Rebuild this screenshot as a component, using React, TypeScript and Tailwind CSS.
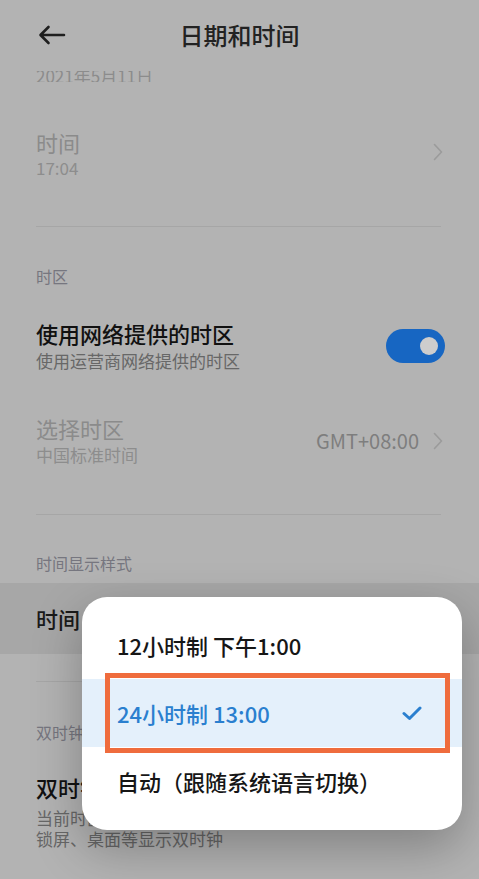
import React from "react";

const font = { fontFamily: '"Noto Sans CJK SC", "Noto Sans", sans-serif' };

function Chevron() {
  return (
    <svg width="10" height="18" viewBox="0 0 10 18" fill="none">
      <path d="M1.5 1.5 L8.5 9 L1.5 16.5" stroke="#9b9b9b" strokeWidth="1.6" strokeLinecap="round" strokeLinejoin="round" />
    </svg>
  );
}

function BackArrow() {
  return (
    <svg width="28" height="20" viewBox="0 0 28 20" fill="none">
      <path d="M26 10 H3 M10.5 2 L2.5 10 L10.5 18" stroke="#1f1f1f" strokeWidth="2.6" strokeLinecap="round" strokeLinejoin="round" />
    </svg>
  );
}

function Toggle() {
  return (
    <div className="w-[59px] h-[34px] rounded-full bg-[#1766c2] flex items-center justify-end pr-[7px]">
      <div className="w-[18px] h-[18px] rounded-full bg-[#cdcdcd]" />
    </div>
  );
}

function Divider() {
  return <div className="h-px bg-[#a6a6a6] ml-[36px] mr-[38px]" />;
}

function TimeFormatDialog() {
  return (
    <div className="absolute left-[82px] top-[597px] w-[380px] h-[233px] rounded-[25px] bg-white shadow-[0_18px_50px_rgba(0,0,0,0.28)] pt-[15px]">
      <div className="h-[67px] flex items-center pl-[35px] text-[22px] font-medium text-[#161616]">
        12小时制 下午1:00
      </div>
      <div className="h-[68px] flex items-center justify-between pl-[35px] pr-[40px] bg-[#e4f0fb] text-[22px] font-medium text-[#2a7fcf]">
        <span>24小时制 13:00</span>
        <svg width="20" height="15" viewBox="0 0 20 15" fill="none">
          <path d="M2 7.5 L7.5 12.5 L18 2" stroke="#2a7fcf" strokeWidth="3" strokeLinecap="round" strokeLinejoin="round" />
        </svg>
      </div>
      <div className="h-[68px] flex items-center pl-[35px] text-[22px] font-medium text-[#161616]">
        自动（跟随系统语言切换）
      </div>
      <div className="absolute left-[23px] top-[76px] w-[345px] h-[80px] border-[5px] border-[#ef6c3d]" />
    </div>
  );
}

export default function App() {
  return (
    <div className="relative w-full h-[879px] overflow-hidden bg-[#b3b3b3]" style={font}>
      <div className="h-[71px] pb-[1px] flex items-center relative">
        <div className="pl-[38px]">
          <BackArrow />
        </div>
        <div className="absolute left-0 right-0 text-center text-[24px] font-medium text-[#222]">日期和时间</div>
      </div>

      <div className="h-[11px] overflow-hidden pl-[36px]">
        <div className="mt-[-4px] text-[17px] leading-[17px] text-[#8c8c8c]">2021年5月11日</div>
      </div>

      <div className="pt-[46px] pb-[46px] pl-[36px] pr-[36px] flex items-center justify-between">
        <div>
          <div className="text-[22px] leading-[28px] text-[#8b8b8b]">时间</div>
          <div className="text-[17px] leading-[24px] text-[#8d8d8d]">17:04</div>
        </div>
        <div className="mb-[4px]">
          <Chevron />
        </div>
      </div>

      <Divider />

      <div className="pt-[39px] pl-[36px] text-[16px] leading-[20px] text-[#76767f]">时区</div>

      <div className="pt-[33px] pl-[36px] pr-[34px] flex items-center justify-between">
        <div>
          <div className="text-[22px] leading-[28px] font-medium text-[#111]">使用网络提供的时区</div>
          <div className="mt-[2px] text-[17px] leading-[24px] text-[#676767]">使用运营商网络提供的时区</div>
        </div>
        <Toggle />
      </div>

      <div className="pt-[41px] pb-[47px] pl-[36px] pr-[36px] flex items-center justify-between">
        <div>
          <div className="text-[22px] leading-[28px] text-[#8b8b8b]">选择时区</div>
          <div className="mt-[1px] text-[17px] leading-[24px] text-[#8d8d8d]">中国标准时间</div>
        </div>
        <div className="flex items-center gap-[14px]">
          <span className="text-[20px] text-[#7e7e7e]">GMT+08:00</span>
          <Chevron />
        </div>
      </div>

      <Divider />

      <div className="pt-[38px] pl-[36px] text-[16px] leading-[20px] text-[#76767f]">时间显示样式</div>

      <div className="mt-[10px] h-[71px] bg-[#a7a7a7] flex items-center pl-[36px]">
        <span className="text-[22px] font-medium text-[#1a1a1a]">时间</span>
      </div>

      <div className="mt-[27px]">
        <Divider />
      </div>

      <div className="pt-[40px] pl-[36px] text-[16px] leading-[20px] text-[#76767f]">双时钟</div>

      <div className="pt-[31px] pl-[36px]">
        <div className="text-[22px] leading-[28px] font-medium text-[#111]">双时钟</div>
        <div className="mt-[6px] text-[17px] leading-[21px] text-[#676767]">当前时区与常用城市不同时</div>
        <div className="text-[17px] leading-[21px] text-[#676767]">锁屏、桌面等显示双时钟</div>
      </div>

      <TimeFormatDialog />
    </div>
  );
}
